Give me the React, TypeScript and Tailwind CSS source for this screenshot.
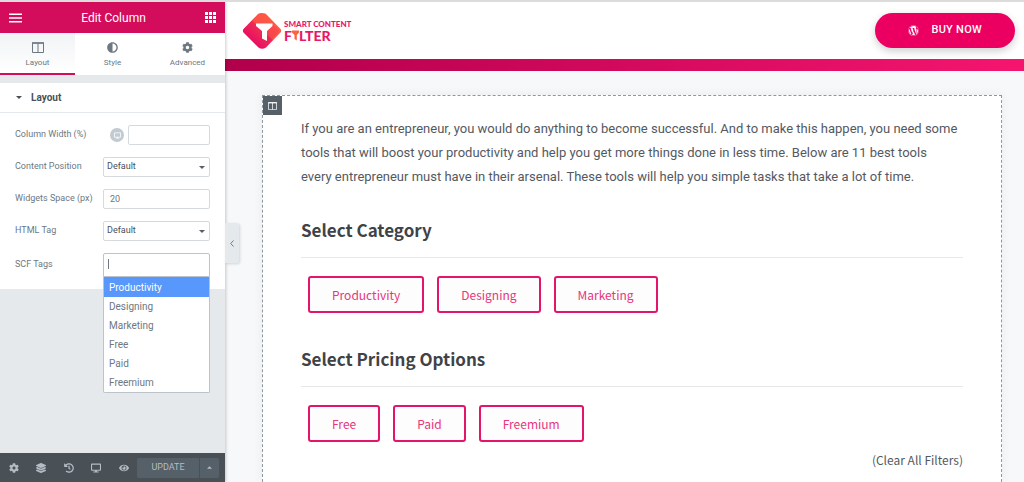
import type { ReactNode } from 'react'
import { FaAdjust, FaCog, FaDesktop, FaEye, FaHistory, FaLayerGroup, FaWordpress } from 'react-icons/fa'

interface RowProps {
  id: string
  label: string
  children: ReactNode
}

interface FilterGroupProps {
  title: string
  options: string[]
}

const tags = ['Productivity', 'Designing', 'Marketing', 'Free', 'Paid', 'Freemium']

const tools = [
  { label: 'Settings', icon: FaCog },
  { label: 'Navigator', icon: FaLayerGroup },
  { label: 'History', icon: FaHistory },
  { label: 'Responsive Mode', icon: FaDesktop },
  { label: 'Preview', icon: FaEye },
]

function ColumnsIcon({ className }: { className?: string }) {
  return (
    <svg viewBox="0 0 12 11" fill="none" stroke="currentColor" className={className} aria-hidden="true">
      <path d="M.5 1h11v9.500H.5zM6 1v9.500" />
      <path d="M0 1h12" strokeWidth="1.500" />
    </svg>
  )
}

function Logo() {
  return (
    <a href="#" aria-label="Smart Content Filter" className="flex items-center gap-[2px]">
      <svg viewBox="0 0 40 38" className="h-[38px] w-10" aria-hidden="true">
        <defs>
          <linearGradient id="logo" x1="0.200" y1="0.800" x2="0.800" y2="0.200">
            <stop offset="0" stopColor="#e80a62" />
            <stop offset="0.500" stopColor="#ee2e56" />
            <stop offset="0.550" stopColor="#fa5048" />
            <stop offset="1" stopColor="#ff5b45" />
          </linearGradient>
        </defs>
        <path
          d="M16 2Q18 .3 22 1.200Q24 1.500 25 3L38.500 17Q39.800 18.500 38.500 20.500L24 35.500Q20 38 16.500 35.500L1.500 20.500Q.3 18.500 1.500 17Z"
          fill="url(#logo)"
        />
        <path d="M30 12L37 19L25 32L24 29V20Z" fill="#e80a62" opacity="0.150" />
        <path d="M14 11.500h16.500v2.500l-5.500 5v10l-5-2.500v-7.500l-6-5z" fill="#fff" />
      </svg>
      <span className="flex flex-col font-['Lato',sans-serif] font-black text-[#e8176a]">
        <span className="text-[8px] leading-[10px]">SMART CONTENT</span>
        <span className="flex items-center text-[14px] leading-[14px]">
          F
          <svg viewBox="0 0 7 11" className="h-[11px] w-[7px]" aria-hidden="true">
            <path d="M0 .5h7v2L4.800 5V10.500L2.500 9V5L0 2.500z" fill="#fb6340" />
          </svg>
          LTER
        </span>
      </span>
    </a>
  )
}

function Row({ id, label, children }: RowProps) {
  return (
    <div className="flex items-center justify-between">
      <label htmlFor={id} className="whitespace-nowrap text-[9px]">
        {label}
      </label>
      {children}
    </div>
  )
}

function DefaultSelect({ id }: { id: string }) {
  return (
    <div className="relative w-[107px]">
      <select
        id={id}
        className="block h-5 w-full appearance-none rounded-[2px] border border-[#d5dadf] bg-white px-[3px] text-[9px] text-[#495157]"
      >
        <option>Default</option>
      </select>
      <svg viewBox="0 0 6 3" className="pointer-events-none absolute right-[5px] top-[9px] h-[3px] w-[6px]" aria-hidden="true">
        <path d="M0 0h6L3 3z" fill="#555d66" />
      </svg>
    </div>
  )
}

function Sidebar() {
  return (
    <aside className="relative z-10 flex w-[225px] shrink-0 flex-col bg-[#e6e9ec] font-['Roboto',sans-serif] text-[#6d7882] shadow-[1px_0_3px_rgba(0,0,0,0.2)]">
      <header className="flex h-[31px] items-center justify-between bg-[#d30c5c] px-[9px] text-white">
        <button type="button" aria-label="Menu">
          <svg viewBox="0 0 13 10" fill="#fff" className="h-[10px] w-[13px]" aria-hidden="true">
            <path d="M0 .5h13v1.500H0zM0 4.200h13v1.500H0zM0 8h13v1.500H0z" />
          </svg>
        </button>
        <h1 className="text-[12px] text-white">Edit Column</h1>
        <button type="button" aria-label="Widgets">
          <svg viewBox="0 0 11 11" fill="#fff" className="h-[11px] w-[11px]" aria-hidden="true">
            <path d="M0 0h3v3H0zM4 0h3v3H4zM8 0h3v3H8zM0 4h3v3H0zM4 4h3v3H4zM8 4h3v3H8zM0 8h3v3H0zM4 8h3v3H4zM8 8h3v3H8z" />
          </svg>
        </button>
      </header>

      <nav className="grid h-[42px] grid-cols-3 bg-white text-[8px]">
        <button type="button" className="flex flex-col items-center justify-center gap-1 border-b-2 border-[#d30c5c] bg-linear-to-b from-[#f1f3f5] to-white pt-1">
          <ColumnsIcon className="h-[11px] w-3" />
          Layout
        </button>
        <button type="button" className="flex flex-col items-center justify-center gap-1 border-b-2 border-transparent pt-1">
          <FaAdjust className="h-[11px] w-[11px]" />
          Style
        </button>
        <button type="button" className="flex flex-col items-center justify-center gap-1 border-b-2 border-transparent pt-1">
          <FaCog className="h-[11px] w-[11px]" />
          Advanced
        </button>
      </nav>

      <section className="mt-2 bg-white">
        <h2 className="border-b border-[#e6e9ec]">
          <button type="button" aria-expanded="true" className="flex h-[29px] w-full items-center gap-[9px] px-4 text-[10px] font-bold text-[#495157]">
            <svg viewBox="0 0 6 3" className="h-[3px] w-[6px]" aria-hidden="true">
              <path d="M0 0h6L3 3z" fill="currentColor" />
            </svg>
            Layout
          </button>
        </h2>
        <div className="flex flex-col gap-3 px-[15px] py-3">
          <Row id="width" label="Column Width (%)">
            <div className="flex items-center gap-1">
              <button type="button" aria-label="Desktop" className="flex h-[14px] w-[14px] items-center justify-center rounded-full bg-[#c2cbd2] text-white">
                <FaDesktop className="h-[7px] w-[7px]" />
              </button>
              <input id="width" type="text" className="h-5 w-[82px] rounded-[2px] border border-[#d5dadf] px-[6px] text-[9px]" />
            </div>
          </Row>
          <Row id="position" label="Content Position">
            <DefaultSelect id="position" />
          </Row>
          <Row id="space" label="Widgets Space (px)">
            <input id="space" type="text" defaultValue="20" className="h-5 w-[107px] rounded-[2px] border border-[#d5dadf] px-[6px] text-[9px]" />
          </Row>
          <Row id="html-tag" label="HTML Tag">
            <DefaultSelect id="html-tag" />
          </Row>
          <Row id="scf-tags" label="SCF Tags">
            <div className="relative w-[107px]">
              <input
                id="scf-tags"
                type="text"
                role="combobox"
                aria-expanded="true"
                aria-controls="scf-list"
                className="block h-6 w-full rounded-t-[2px] border border-[#bcc3ca] px-1 text-[10px]"
              />
              <span className="absolute left-[5px] top-[6px] h-[10px] w-px bg-[#6d7882]" />
              <ul
                id="scf-list"
                role="listbox"
                className="absolute left-0 top-full w-full rounded-b-[2px] border border-t-0 border-[#bcc3ca] bg-white text-[10px] leading-[19px]"
              >
                {tags.map((tag, i) => (
                  <li
                    key={tag}
                    role="option"
                    aria-selected={i === 0}
                    className="px-[5px] aria-selected:bg-[#5897fb] aria-selected:pt-px aria-selected:text-white"
                  >
                    {tag}
                  </li>
                ))}
              </ul>
            </div>
          </Row>
        </div>
      </section>

      <footer className="mt-auto flex h-[29px] items-center bg-[#495157] pl-2 pr-[6px] text-[#b4bcc4]">
        <div className="flex flex-1 items-center justify-between pr-2">
          {tools.map(({ label, icon: Icon }) => (
            <button key={label} type="button" aria-label={label} className="flex w-[11px] justify-center">
              <Icon className="h-[10px] w-[10px]" />
            </button>
          ))}
        </div>
        <button type="button" className="h-5 w-[62px] rounded-l-[2px] bg-[#556068] text-[9px]">
          UPDATE
        </button>
        <button type="button" aria-label="Save options" className="flex h-5 w-5 items-center justify-center rounded-r-[2px] border-l border-[#495157] bg-[#556068]">
          <svg viewBox="0 0 6 3" className="h-[3px] w-[5px]" aria-hidden="true">
            <path d="M0 3h6L3 0z" fill="currentColor" />
          </svg>
        </button>
      </footer>

      <button
        type="button"
        aria-label="Hide panel"
        className="absolute left-full top-[221px] flex h-10 w-[14px] items-center justify-center rounded-r-[2px] bg-[#e6e9ec] shadow-[1px_1px_3px_rgba(0,0,0,0.15)]"
      >
        <svg viewBox="0 0 4 7" fill="none" stroke="#6d7882" className="h-[7px] w-1" aria-hidden="true">
          <path d="M3.500 .5L.7 3.500L3.500 6.500" />
        </svg>
      </button>
    </aside>
  )
}

function FilterGroup({ title, options }: FilterGroupProps) {
  return (
    <section className="font-['Noto_Sans_CJK_SC',sans-serif]">
      <h2 className="border-b border-[#e8e8e8] pb-[13px] text-[17px] font-bold leading-7 text-[#3f4347]">{title}</h2>
      <div className="flex flex-wrap gap-[13px] px-[7px] pt-[18px]">
        {options.map((option) => (
          <button
            key={option}
            type="button"
            className="h-[37px] rounded-[3px] border-2 border-[#e4146b] bg-[#fdfdfd] px-[22px] text-[12px] text-[#e8357c]"
          >
            {option}
          </button>
        ))}
      </div>
    </section>
  )
}

export default function App() {
  return (
    <div className="flex h-screen overflow-hidden border-t-2 border-[#dcdcdc] bg-[#f7f8fa]">
      <Sidebar />
      <div className="flex min-w-0 flex-1 flex-col">
        <header className="flex h-[57px] shrink-0 items-center justify-between bg-white pl-[17px] pr-[9px]">
          <Logo />
          <a
            href="#"
            className="flex h-[35px] items-center gap-3 rounded-full bg-[#eb0062] px-[33px] font-['Roboto',sans-serif] text-[11px] font-medium tracking-wide text-white shadow-[0_3px_8px_rgba(0,0,0,0.2)]"
          >
            <FaWordpress className="h-[11px] w-[11px]" />
            BUY NOW
          </a>
        </header>
        <div className="h-3 shrink-0 bg-linear-to-r from-[#b1004b] to-[#f5156f]" />
        <main className="flex min-h-0 flex-1 pl-[37px] pr-[22px] pt-6">
          <article className="relative flex-1 border border-b-0 border-dashed border-[#8f989f] bg-white px-[38px] pt-[21px] shadow-[0_0_10px_rgba(0,0,0,0.06)]">
            <button type="button" aria-label="Edit column" className="absolute left-0 top-0 flex h-[19px] w-[19px] items-center justify-center bg-[#556068] text-white">
              <ColumnsIcon className="h-2 w-[9px]" />
            </button>
            <p className="pr-1 font-['Roboto',sans-serif] text-[13px] leading-6 text-[#54595f]">
              If you are an entrepreneur, you would do anything to become successful. And to make this happen, you need
              some tools that will boost your productivity and help you get more things done in less time. Below are 11
              best tools every entrepreneur must have in their arsenal. These tools will help you simple tasks that take
              a lot of time.
            </p>
            <div className="flex flex-col gap-8 pt-[27px]">
              <FilterGroup title="Select Category" options={['Productivity', 'Designing', 'Marketing']} />
              <FilterGroup title="Select Pricing Options" options={['Free', 'Paid', 'Freemium']} />
            </div>
            <div className="flex justify-end pt-2 font-['Noto_Sans_CJK_SC',sans-serif] text-[12px] leading-5 text-[#54595f]">
              <button type="button">(Clear All Filters)</button>
            </div>
          </article>
        </main>
      </div>
    </div>
  )
}
